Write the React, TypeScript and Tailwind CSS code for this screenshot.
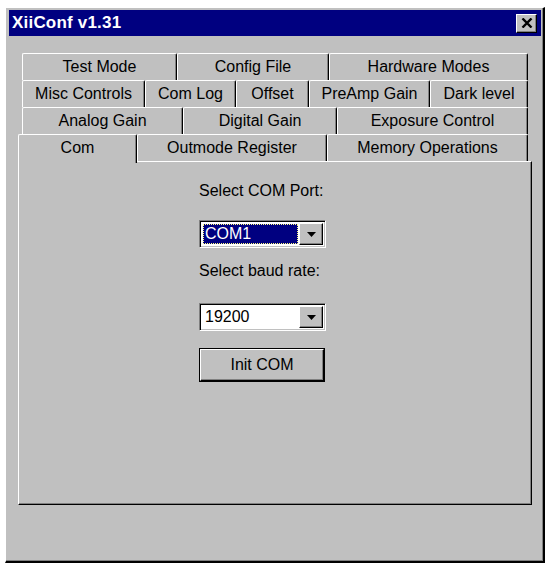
import { ReactNode } from 'react';

type Tab = { label: string; width: number };

const tabRows: Tab[][] = [
  [
    { label: 'Test Mode', width: 155 },
    { label: 'Config File', width: 152 },
    { label: 'Hardware Modes', width: 199 },
  ],
  [
    { label: 'Misc Controls', width: 123 },
    { label: 'Com Log', width: 91 },
    { label: 'Offset', width: 73 },
    { label: 'PreAmp Gain', width: 121 },
    { label: 'Dark level', width: 98 },
  ],
  [
    { label: 'Analog Gain', width: 161 },
    { label: 'Digital Gain', width: 154 },
    { label: 'Exposure Control', width: 191 },
  ],
];

const frontRow: Tab[] = [
  { label: 'Outmode Register', width: 190 },
  { label: 'Memory Operations', width: 201 },
];

// Raised 3D edge used by tabs, buttons and the window frame
const raised =
  'border-t border-l border-t-white border-l-white border-r border-b border-r-black border-b-black shadow-[inset_-1px_-1px_0_#808080]';

function TabButton({ label, width }: Tab) {
  return (
    <div
      className="h-[27px] flex items-center justify-center rounded-t-[2px] border-t border-l border-t-white border-l-white border-r border-r-black shadow-[inset_-1px_0_0_#808080] text-[16px] text-black"
      style={{ width }}
    >
      {label}
    </div>
  );
}

function DropArrow() {
  return (
    <div className={`w-[24px] h-full flex items-center justify-center bg-[#c0c0c0] ${raised}`}>
      <svg width="9" height="5" viewBox="0 0 9 5">
        <path d="M0 0h9L4.5 5z" fill="#000" />
      </svg>
    </div>
  );
}

function Combo({ children }: { children: ReactNode }) {
  return (
    <div className="w-[127px] h-[28px] flex bg-white border-t border-l border-t-[#808080] border-l-[#808080] border-r border-b border-r-white border-b-white shadow-[inset_1px_1px_0_#000,inset_-1px_-1px_0_#c0c0c0] p-[2px]">
      <div className="flex-1 flex items-center pl-[1px] pr-[1px]">{children}</div>
      <DropArrow />
    </div>
  );
}

export default function App() {
  return (
    <div
      className="w-[555px] h-[569px] bg-white pt-[7px] pl-[5px]"
      style={{ fontFamily: '"Liberation Sans", Arial, sans-serif' }}
    >
      <div
        className={`w-[540px] h-[556px] bg-[#c0c0c0] border-t border-l border-t-white border-l-white border-r-2 border-b-2 border-r-black border-b-black shadow-[inset_-1px_-1px_0_#808080] pt-[2px] pl-[3px] pr-[2px]`}
      >
        {/* caption */}
        <div className="h-[26px] bg-[#000080] flex items-center justify-between pl-[3px] pr-[4px]">
          <span className="text-white font-bold text-[17px] tracking-[0.2px]">XiiConf v1.31</span>
          <button className={`w-[21px] h-[19px] bg-[#c0c0c0] flex items-center justify-center ${raised}`}>
            <svg width="12" height="10" viewBox="0 0 12 10">
              <path d="M1.5 0.5L10.5 9.5M10.5 0.5L1.5 9.5" stroke="#000" strokeWidth="2.4" />
            </svg>
          </button>
        </div>

        {/* tab strip */}
        <div className="ml-[9px] mt-[17px] w-[514px]">
          {tabRows.map((row, i) => (
            <div key={i} className="flex pl-[4px]">
              {row.map((t) => (
                <TabButton key={t.label} {...t} />
              ))}
            </div>
          ))}
          <div className="flex items-end h-[27px]">
            <div className="relative z-10 w-[119px] h-[29px] -mb-[2px] bg-[#c0c0c0] rounded-t-[2px] border-t border-l border-t-white border-l-white border-r border-r-black shadow-[inset_-1px_0_0_#808080] flex justify-center pt-[1px] text-[16px] text-black">
              Com
            </div>
            {frontRow.map((t) => (
              <TabButton key={t.label} {...t} />
            ))}
          </div>

          {/* page */}
          <div className="h-[344px] border-t border-l border-t-white border-l-white border-r border-b border-r-black border-b-black shadow-[inset_-1px_-1px_0_#808080] pl-[180px] pt-[19px] text-[16px] text-black">
            <div className="h-[20px] leading-[20px]">Select COM Port:</div>
            <div className="mt-[19px]">
              <Combo>
                <div className="w-full h-[20px] bg-[#000080] outline outline-1 outline-dotted outline-[#ffff80] -outline-offset-1 text-white leading-[20px] pl-[2px]">
                  COM1
                </div>
              </Combo>
            </div>
            <div className="mt-[13px] h-[20px] leading-[20px]">Select baud rate:</div>
            <div className="mt-[22px]">
              <Combo>
                <span className="pl-[2px] leading-[20px]">19200</span>
              </Combo>
            </div>
            <div className="mt-[17px] w-[126px] h-[34px] border border-black">
              <div className={`w-full h-full flex items-center justify-center ${raised}`}>Init COM</div>
            </div>
          </div>
        </div>
      </div>
    </div>
  );
}
